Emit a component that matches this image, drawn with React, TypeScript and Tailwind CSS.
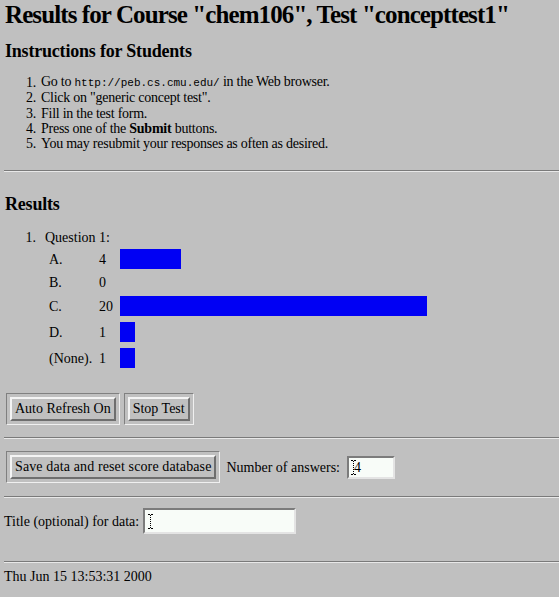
import React from "react";

const instructions: React.ReactNode[] = [
  <>
    Go to <span className="font-['Liberation_Mono',monospace] text-[11px] tracking-normal">http://peb.cs.cmu.edu/</span> in the Web browser.
  </>,
  <>Click on "generic concept test".</>,
  <>Fill in the test form.</>,
  <>
    Press one of the <b>Submit</b> buttons.
  </>,
  <>You may resubmit your responses as often as desired.</>,
];

const answers = [
  { label: "A.", count: 4 },
  { label: "B.", count: 0 },
  { label: "C.", count: 20 },
  { label: "D.", count: 1 },
  { label: "(None).", count: 1 },
];

function Rule() {
  return <div className="ml-[4px] h-[2px] border-t border-t-[#7a7a7a] border-b border-b-[#e8e8e8]" />;
}

function Button({ children, wide }: { children: React.ReactNode; wide?: boolean }) {
  return (
    <div className="border border-t-[#808080] border-l-[#808080] border-b-[#f0f0f0] border-r-[#f0f0f0] p-[3px]">
      <button
        className={`h-[24px] border-2 border-t-[#f4f4f4] border-l-[#f4f4f4] border-b-[#6e6e6e] border-r-[#6e6e6e] bg-[#c0c0c0] px-[3px] text-[14px] leading-none text-black ${
          wide ? "tracking-[0.12px]" : ""
        }`}
      >
        {children}
      </button>
    </div>
  );
}

function Caret() {
  return (
    <svg width="5" height="15" viewBox="0 0 5 15" className="shrink-0">
      <path d="M0 0.5h2M3 0.5h2M0 14.5h2M3 14.5h2" stroke="#000" strokeWidth="1" />
      <path d="M2.5 1v13" stroke="#000" strokeWidth="1" strokeDasharray="1 1" />
    </svg>
  );
}

export default function App() {
  return (
    <div className="w-[559px] h-[597px] overflow-hidden bg-[#c0c0c0] text-black font-['Liberation_Serif',serif] text-[14px] leading-[15px]">
      {/* Title */}
      <h1 className="pl-[5px] pt-[2px] text-[25px] leading-[25px] font-bold tracking-[-0.9px] whitespace-nowrap">
        Results for Course "chem106", Test "concepttest1"
      </h1>

      {/* Instructions */}
      <h2 className="pl-[5px] mt-[15px] text-[18px] leading-[18px] font-bold tracking-[-0.2px]">Instructions for Students</h2>
      <ol className="mt-[15px] flex flex-col tracking-[-0.25px]">
        {instructions.map((item, i) => (
          <li key={i} className="flex h-[15.3px] items-center whitespace-nowrap">
            <span className="w-[36px] text-right">{i + 1}.</span>
            <span className="pl-[5px]">{item}</span>
          </li>
        ))}
      </ol>

      <div className="mt-[19px]">
        <Rule />
      </div>

      {/* Results */}
      <h2 className="pl-[5px] mt-[23px] text-[18px] leading-[18px] font-bold tracking-[-0.2px]">Results</h2>
      <div className="mt-[17px] flex h-[15px] items-center">
        <span className="w-[36px] text-right">1.</span>
        <span className="pl-[9px]">Question 1:</span>
      </div>
      <div className="mt-[1px] ml-[49px] flex flex-col">
        {answers.map((a) => (
          <div key={a.label} className={`flex items-center ${a.count > 0 ? "h-[26px]" : "h-[21px]"}`}>
            <span className="w-[50px]">{a.label}</span>
            <span className="w-[21px]">{a.count}</span>
            {a.count > 0 && <div className="h-[20px] bg-[#0000f4]" style={{ width: Math.round(a.count * 15.35) }} />}
          </div>
        ))}
      </div>

      {/* Controls */}
      <div className="mt-[22px] ml-[6px] flex gap-[4px]">
        <Button>Auto Refresh On</Button>
        <Button>Stop Test</Button>
      </div>

      <div className="mt-[12px]">
        <Rule />
      </div>

      <div className="mt-[12px] ml-[6px] flex items-center">
        <Button wide>Save data and reset score database</Button>
        <span className="ml-[6px]">Number of answers:</span>
        <div className="ml-[7px] flex h-[23px] w-[48px] items-center border-2 border-t-[#7c7c7c] border-l-[#7c7c7c] border-b-[#e4e4e4] border-r-[#e4e4e4] bg-[#f8fcf8] pl-[2px]">
          <Caret />
          <span className="-ml-[2px]">4</span>
        </div>
      </div>

      <div className="mt-[13px]">
        <Rule />
      </div>

      <div className="mt-[10px] ml-[4px] flex items-center">
        <span>Title (optional) for data:</span>
        <div className="ml-[4px] flex h-[26px] w-[153px] items-center border-2 border-t-[#7c7c7c] border-l-[#7c7c7c] border-b-[#e4e4e4] border-r-[#e4e4e4] bg-[#f8fcf8] pl-[3px]">
          <Caret />
        </div>
      </div>

      <div className="mt-[27px]">
        <Rule />
      </div>

      <div className="mt-[6px] pl-[4px]">Thu Jun 15 13:53:31 2000</div>
    </div>
  );
}
